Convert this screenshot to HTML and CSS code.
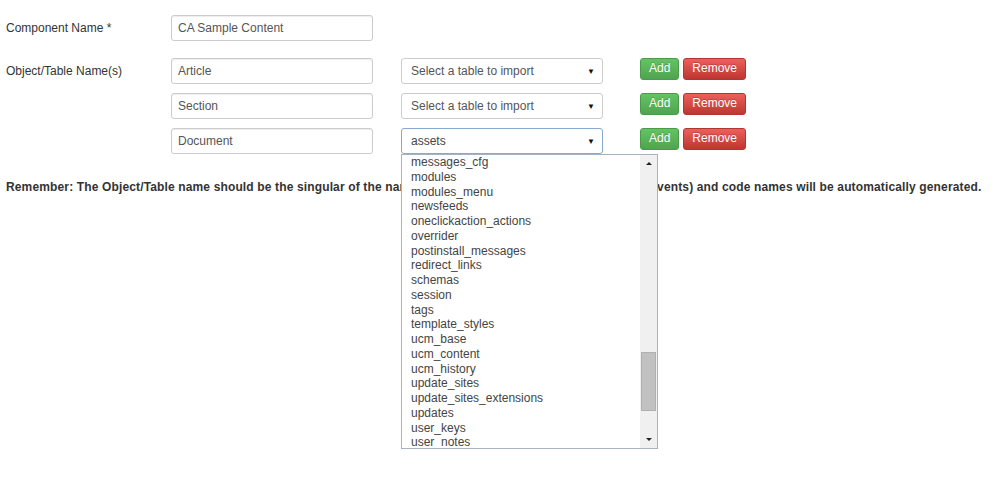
FILE: index.html
```html
<!DOCTYPE html>
<html>
<head>
<meta charset="utf-8">
<link rel="stylesheet" href="styles.css">
</head>
<body>
<div class="form">
  <div class="row first">
    <div class="label">Component Name *</div>
    <div class="input">CA Sample Content</div>
  </div>
  <div class="row second">
    <div class="label">Object/Table Name(s)</div>
    <div class="input">Article</div>
    <div class="select"><span>Select a table to import</span><span class="caret">&#9660;</span></div>
    <div class="actions"><span class="btn add">Add</span><span class="btn remove">Remove</span></div>
  </div>
  <div class="row">
    <div class="label"></div>
    <div class="input">Section</div>
    <div class="select"><span>Select a table to import</span><span class="caret">&#9660;</span></div>
    <div class="actions"><span class="btn add">Add</span><span class="btn remove">Remove</span></div>
  </div>
  <div class="row">
    <div class="label"></div>
    <div class="input">Document</div>
    <div class="select focus"><span>assets</span><span class="caret">&#9660;</span>
      <div class="dropdown">
        <ul class="items">
          <li>messages_cfg</li>
          <li>modules</li>
          <li>modules_menu</li>
          <li>newsfeeds</li>
          <li>oneclickaction_actions</li>
          <li>overrider</li>
          <li>postinstall_messages</li>
          <li>redirect_links</li>
          <li>schemas</li>
          <li>session</li>
          <li>tags</li>
          <li>template_styles</li>
          <li>ucm_base</li>
          <li>ucm_content</li>
          <li>ucm_history</li>
          <li>update_sites</li>
          <li>update_sites_extensions</li>
          <li>updates</li>
          <li>user_keys</li>
          <li>user_notes</li>
        </ul>
        <div class="scrollbar">
          <div class="sb-btn"><span class="tri up"></span></div>
          <div class="sb-track"><div class="sb-thumb"></div></div>
          <div class="sb-btn"><span class="tri down"></span></div>
        </div>
      </div>
    </div>
    <div class="actions"><span class="btn add">Add</span><span class="btn remove">Remove</span></div>
  </div>
  <p class="note">Remember: The Object/Table name should be the singular of the name (e.g. use Article not Articles, Event not Events) and code names will be automatically generated.</p>
</div>
</body>
</html>
```
FILE: styles.css
```css
html, body {
  margin: 0;
  padding: 0;
  background: #fff;
}
body {
  font-family: "Liberation Sans", Arial, sans-serif;
  font-size: 12px;
  color: #333;
  min-height: 478px;
}
.form {
  padding: 15px 0 0 6px;
}
.row {
  display: flex;
  align-items: flex-start;
  height: 26px;
  margin-top: 9px;
}
.row.first {
  margin-top: 0;
}
.row.second {
  margin-top: 17px;
}
.label {
  width: 165px;
  line-height: 27px;
  color: #333;
}
.input {
  box-sizing: border-box;
  width: 202px;
  height: 26px;
  line-height: 24px;
  border: 1px solid #ccc;
  border-radius: 3px;
  padding: 0 6px;
  color: #555;
  box-shadow: inset 0 1px 1px rgba(0, 0, 0, 0.075);
}
.select {
  position: relative;
  box-sizing: border-box;
  width: 202px;
  height: 26px;
  margin-left: 28px;
  border: 1px solid #ccc;
  border-radius: 3px;
  padding: 0 7px 0 9px;
  display: flex;
  justify-content: space-between;
  align-items: center;
  color: #555;
  background: #fff;
}
.select.focus {
  border-color: #86a9d3;
  color: #444;
}
.caret {
  font-size: 8px;
  color: #111;
}
.actions {
  display: flex;
  gap: 4px;
  margin-left: 37px;
}
.btn {
  box-sizing: border-box;
  height: 22px;
  line-height: 19px;
  padding: 0 8px;
  border-radius: 3px;
  color: #fff;
  border: 1px solid rgba(0, 0, 0, 0.15);
  text-shadow: 0 -1px 0 rgba(0, 0, 0, 0.2);
}
.btn.add {
  background: linear-gradient(#62c462, #51a351);
  border-color: #4a9a4a;
}
.btn.remove {
  background: linear-gradient(#ee5f5b, #bd362f);
  border-color: #b33530;
}
.dropdown {
  position: absolute;
  top: 25px;
  left: -1px;
  width: 257px;
  height: 295px;
  box-sizing: border-box;
  border: 1px solid #a7b3c1;
  background: #fff;
  display: flex;
  z-index: 5;
}
.items {
  list-style: none;
  margin: 0;
  padding: 0 0 0 9px;
  flex: 1;
  overflow: hidden;
  color: #444;
}
.items li {
  height: 14.75px;
  line-height: 14.75px;
  white-space: nowrap;
}
.scrollbar {
  width: 17px;
  background: #f0f0f0;
  display: flex;
  flex-direction: column;
}
.sb-btn {
  height: 17px;
  display: flex;
  align-items: center;
  justify-content: center;
}
.tri {
  width: 0;
  height: 0;
  border-left: 3px solid transparent;
  border-right: 3px solid transparent;
}
.tri.up {
  border-bottom: 3px solid #222;
}
.tri.down {
  border-top: 3px solid #222;
}
.sb-track {
  flex: 1;
  padding: 0 1px;
}
.sb-thumb {
  margin-top: 180px;
  height: 59px;
  background: #c1c1c1;
  border: 1px solid #b0b0b0;
  box-sizing: border-box;
}
.note {
  margin: 26px 0 0 0;
  font-weight: bold;
  line-height: 15px;
  letter-spacing: 0.14px;
  color: #333;
  white-space: nowrap;
}
```
